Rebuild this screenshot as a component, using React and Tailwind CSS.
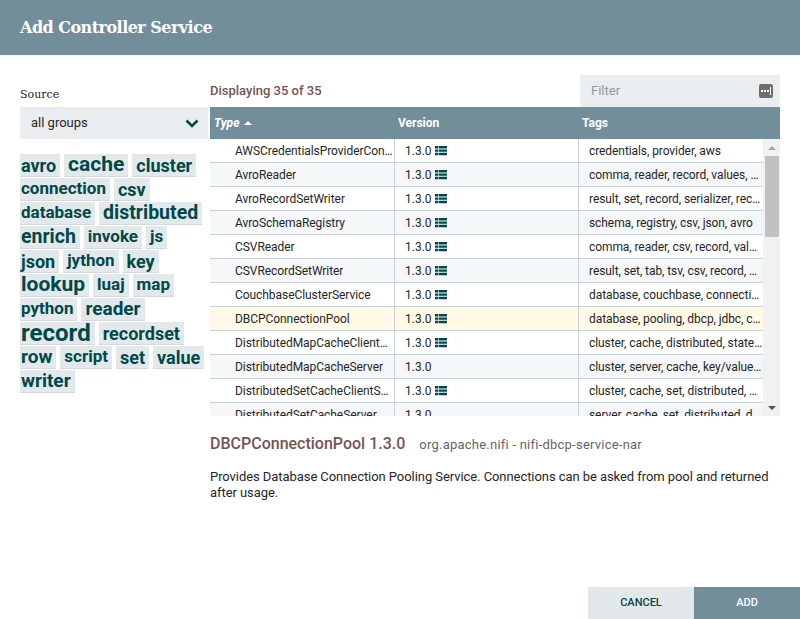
import React from 'react';

const tags = [
    [['avro', 'text-[18px]'], ['cache', 'text-[21px]'], ['cluster', 'text-[18px]']],
    [['connection', 'text-[17px]'], ['csv', 'text-[18px]']],
    [['database', 'text-[17px]'], ['distributed', 'text-[19.5px]']],
    [['enrich', 'text-[19.5px]'], ['invoke', 'text-[17px]'], ['js', 'text-[17px]']],
    [['json', 'text-[18px]'], ['jython', 'text-[17px]'], ['key', 'text-[18px]']],
    [['lookup', 'text-[21px]'], ['luaj', 'text-[17px]'], ['map', 'text-[17px]']],
    [['python', 'text-[17px]'], ['reader', 'text-[19px]']],
    [['record', 'text-[24px]'], ['recordset', 'text-[18px]']],
    [['row', 'text-[19px]'], ['script', 'text-[17px]'], ['set', 'text-[18px]'], ['value', 'text-[18px]']],
    [['writer', 'text-[19px]']],
];

const rows = [
    ['AWSCredentialsProviderControllerService', true, 'credentials, provider, aws'],
    ['AvroReader', true, 'comma, reader, record, values, delimited, separated'],
    ['AvroRecordSetWriter', true, 'result, set, record, serializer, recordset, row'],
    ['AvroSchemaRegistry', true, 'schema, registry, csv, json, avro'],
    ['CSVReader', true, 'comma, reader, csv, record, values, delimited'],
    ['CSVRecordSetWriter', true, 'result, set, tab, tsv, csv, record, writer, row'],
    ['CouchbaseClusterService', true, 'database, couchbase, connection, nosql'],
    ['DBCPConnectionPool', true, 'database, pooling, dbcp, jdbc, connection, store'],
    ['DistributedMapCacheClientService', true, 'cluster, cache, distributed, state, map'],
    ['DistributedMapCacheServer', false, 'cluster, server, cache, key/value, distributed'],
    ['DistributedSetCacheClientService', true, 'cluster, cache, set, distributed, state'],
    ['DistributedSetCacheServer', false, 'server, cache, set, distributed, duplicate'],
];

const ListIcon = () => (
    <svg width="12" height="10" viewBox="0 0 12 10" fill="#004849">
        <path d="M0 0h3v2.4H0zM3.6 0H12v2.4H3.6zM0 3.4h3v2.4H0zM3.6 3.4H12v2.4H3.6zM0 6.8h3v2.4H0zM3.6 6.8H12v2.4H3.6z" />
    </svg>
);

const App = () => {
    return (
        <div className="w-[800px] h-[619px] bg-white flex flex-col font-['Roboto',sans-serif] text-[#262626] overflow-hidden">
            <div className="h-[55px] bg-[#728e9b] flex items-center pl-5 shrink-0">
                <h1 className="text-white text-[16px] font-bold font-['DejaVu_Serif',serif] tracking-[-0.53px]">Add Controller Service</h1>
            </div>

            <div className="flex flex-1 pl-5 pt-[20px]">
                <div className="w-[190px] shrink-0">
                    <div className="h-[32px] flex items-end pb-[4px] text-[11px] font-['DejaVu_Serif',serif]">Source</div>
                    <div className="h-8 w-[188px] bg-[#e9edef] flex items-center justify-between pl-[11px] pr-[9px] text-[13px]">
                        <span>all groups</span>
                        <svg width="14" height="9" viewBox="0 0 14 9" fill="none" stroke="#004849" strokeWidth="2.6">
                            <path d="M1.5 1.5 7 7l5.5-5.5" />
                        </svg>
                    </div>
                    <div className="mt-[15px] flex flex-col">
                        {tags.map((line, i) => (
                            <div key={i} className="flex gap-1 h-6">
                                {line.map(([name, size], j) => (
                                    <span key={name} className={`h-[23px] flex items-center pr-1 bg-[#e3e8eb] border-b border-[#d4dbde] font-bold text-[#004849] ${j === 0 ? 'pl-px' : 'pl-1'} ${size}`}>
                                        {name}
                                    </span>
                                ))}
                            </div>
                        ))}
                    </div>
                </div>

                <div className="w-[570px] flex flex-col">
                    <div className="flex h-8 items-center justify-between">
                        <span className="text-[13px] font-medium text-[#775351]">Displaying 35 of 35</span>
                        <div className="w-[200px] h-8 bg-[#eaeef0] flex items-center justify-between pl-[11px] pr-[7px]">
                            <span className="text-[13px] text-[#8a9ba5]">Filter</span>
                            <svg width="14" height="14" viewBox="0 0 14 14">
                                <rect width="14" height="14" rx="2" fill="#6e6e6e" />
                                <rect x="2" y="6" width="2" height="2" fill="#fff" />
                                <rect x="5" y="6" width="2" height="2" fill="#fff" />
                                <rect x="8" y="6" width="2" height="2" fill="#fff" />
                                <rect x="11" y="3" width="1" height="8" fill="#fff" />
                            </svg>
                        </div>
                    </div>

                    <div className="h-8 bg-[#728e9b] flex items-center text-white text-[12px] font-bold">
                        <div className="w-[184px] pl-1 flex items-center gap-[5px] italic">
                            Type
                            <svg width="8" height="4" viewBox="0 0 8 4" fill="#fff"><path d="M4 0l4 4H0z" /></svg>
                        </div>
                        <div className="w-[184px] pl-[4px]">Version</div>
                        <div className="pl-[4px]">Tags</div>
                    </div>

                    <div className="h-[277px] flex overflow-hidden">
                        <div className="w-[553px] shrink-0">
                            {rows.map(([name, hasIcon, rowTags], i) => (
                                <div
                                    key={name}
                                    className={`h-6 flex items-center border-b border-[#c7d2d7] text-[12px] ${name === 'DBCPConnectionPool' ? 'bg-[#fff9e6]' : i % 2 === 1 ? 'bg-[#f4f6f7]' : 'bg-white'}`}
                                >
                                    <div className="w-[185px] h-full flex items-center pl-[25px] border-r border-[#c7d2d7] shrink-0 tracking-[-0.06px]">
                                        <span className="truncate">{name}</span>
                                    </div>
                                    <div className="w-[184px] h-full flex items-center gap-[3px] pl-[10px] border-r border-[#c7d2d7] shrink-0">
                                        1.3.0
                                        {hasIcon && <ListIcon />}
                                    </div>
                                    <div className="flex-1 min-w-0 pl-[10px] truncate tracking-[-0.08px]">{rowTags}</div>
                                </div>
                            ))}
                        </div>
                        <div className="w-[17px] bg-[#f1f1f1] flex flex-col items-center shrink-0">
                            <div className="h-[17px] flex items-center justify-center">
                                <svg width="8" height="4" viewBox="0 0 8 4" fill="#a3a3a3"><path d="M4 0l4 4H0z" /></svg>
                            </div>
                            <div className="w-[14px] h-[81px] bg-[#c1c1c1]"></div>
                            <div className="flex-1"></div>
                            <div className="h-[17px] flex items-center justify-center">
                                <svg width="8" height="4" viewBox="0 0 8 4" fill="#505050"><path d="M0 0h8L4 4z" /></svg>
                            </div>
                        </div>
                    </div>

                    <div className="mt-[16px] flex items-baseline gap-[14px]">
                        <span className="text-[16px] font-medium text-[#775351]">DBCPConnectionPool 1.3.0</span>
                        <span className="text-[13px] tracking-[0.23px] text-[#666]">org.apache.nifi - nifi-dbcp-service-nar</span>
                    </div>
                    <p className="mt-[13px] text-[13px] tracking-[-0.065px] leading-[16px] w-[565px]">
                        Provides Database Connection Pooling Service. Connections can be asked from pool and returned after usage.
                    </p>
                </div>
            </div>

            <div className="h-[32px] mb-0 flex justify-end shrink-0 mt-auto">
                <button className="w-[106px] bg-[#e3e8eb] text-[#004849] text-[11px] font-medium">CANCEL</button>
                <button className="w-[106px] bg-[#728e9b] text-white text-[11px] font-medium">ADD</button>
            </div>
        </div>
    );
};

export default App;
